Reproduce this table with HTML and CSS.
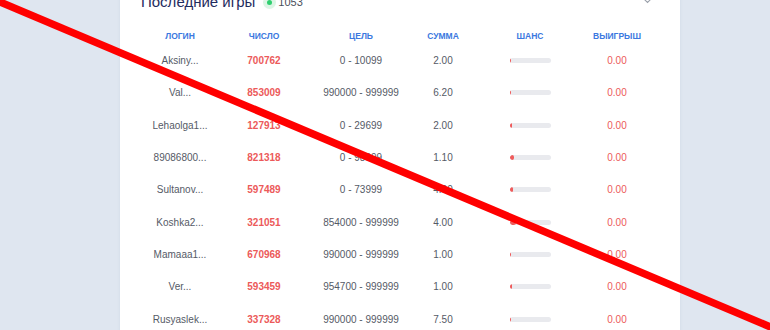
FILE: index.html
```html
<!DOCTYPE html>
<html lang="ru">
<head>
<meta charset="utf-8">
<title>Последние игры</title>
<link rel="stylesheet" href="styles.css">
</head>
<body>
<div class="page">
  <section class="card">
    <header class="card-head">
      <h2 class="title">Последние игры</h2>
      <span class="online"><span class="dot"></span></span>
      <span class="count">1053</span>
      <svg class="chevron" width="11" height="7" viewBox="0 0 11 7"><path d="M1 1 L5.5 5.5 L10 1" fill="none" stroke="#9aa0aa" stroke-width="1.1"/></svg>
    </header>
    <div class="table">
      <div class="thead">
        <div>Логин</div><div>Число</div><div>Цель</div><div>Сумма</div><div>Шанс</div><div>Выигрыш</div>
      </div>
      <div class="row"><div class="login">Aksiny...</div><div class="num">700762</div><div>0 - 10099</div><div>2.00</div><div class="chance"><span class="bar"><span class="fill" style="width:1.5px"></span></span></div><div class="win">0.00</div></div>
      <div class="row"><div class="login">Val...</div><div class="num">853009</div><div>990000 - 999999</div><div>6.20</div><div class="chance"><span class="bar"><span class="fill" style="width:1.5px"></span></span></div><div class="win">0.00</div></div>
      <div class="row"><div class="login">Lehaolga1...</div><div class="num">127913</div><div>0 - 29699</div><div>2.00</div><div class="chance"><span class="bar"><span class="fill" style="width:2px"></span></span></div><div class="win">0.00</div></div>
      <div class="row"><div class="login">89086800...</div><div class="num">821318</div><div>0 - 98999</div><div>1.10</div><div class="chance"><span class="bar"><span class="fill" style="width:4px"></span></span></div><div class="win">0.00</div></div>
      <div class="row"><div class="login">Sultanov...</div><div class="num">597489</div><div>0 - 73999</div><div>4.00</div><div class="chance"><span class="bar"><span class="fill" style="width:3.5px"></span></span></div><div class="win">0.00</div></div>
      <div class="row"><div class="login">Koshka2...</div><div class="num">321051</div><div>854000 - 999999</div><div>4.00</div><div class="chance"><span class="bar"><span class="fill" style="width:6px"></span></span></div><div class="win">0.00</div></div>
      <div class="row"><div class="login">Mamaaa1...</div><div class="num">670968</div><div>990000 - 999999</div><div>1.00</div><div class="chance"><span class="bar"><span class="fill" style="width:1.5px"></span></span></div><div class="win">0.00</div></div>
      <div class="row"><div class="login">Ver...</div><div class="num">593459</div><div>954700 - 999999</div><div>1.00</div><div class="chance"><span class="bar"><span class="fill" style="width:2px"></span></span></div><div class="win">0.00</div></div>
      <div class="row"><div class="login">Rusyaslek...</div><div class="num">337328</div><div>990000 - 999999</div><div>7.50</div><div class="chance"><span class="bar"><span class="fill" style="width:1.5px"></span></span></div><div class="win">0.00</div></div>
    </div>
  </section>
</div>
<svg class="strike" width="770" height="330" viewBox="0 0 770 330"><line x1="-10" y1="-2.2" x2="780" y2="331" stroke="#ff0000" stroke-width="7.5"/></svg>
</body>
</html>
```
FILE: styles.css
```css
html, body {
  margin: 0;
  padding: 0;
}
body {
  background: #dfe6f0;
  font-family: "Liberation Sans", Arial, sans-serif;
  width: 770px;
  height: 330px;
  overflow: hidden;
  position: relative;
}
.page {
  padding-left: 120px;
}
.card {
  width: 560px;
  height: 400px;
  margin-top: -8px;
  background: #ffffff;
  box-shadow: 0 0 3px rgba(60, 80, 120, 0.08);
  padding-left: 18px;
  box-sizing: border-box;
}
.card-head {
  display: flex;
  align-items: center;
  height: 20px;
  padding-left: 3px;
  padding-right: 27px;
}
.title {
  margin: 0;
  font-size: 15px;
  font-weight: normal;
  color: #1f2b5e;
  line-height: 20px;
}
.online {
  width: 13px;
  height: 13px;
  border-radius: 50%;
  background: #dcf5e5;
  display: flex;
  align-items: center;
  justify-content: center;
  margin-left: 8px;
}
.dot {
  width: 5px;
  height: 5px;
  border-radius: 50%;
  background: #2fcf6f;
}
.count {
  font-size: 11px;
  color: #4a4f5a;
  margin-left: 2px;
}
.chevron {
  margin-left: auto;
  margin-top: -3px;
}
.table {
  margin-top: 15px;
}
.thead, .row {
  display: grid;
  grid-template-columns: 84px 84px 110px 54px 120px 54px;
  align-items: center;
  justify-items: center;
  text-align: center;
}
.thead {
  height: 17.4px;
  font-size: 8.5px;
  font-weight: bold;
  text-transform: uppercase;
  color: #3b78e0;
}
.row {
  height: 32.35px;
  font-size: 10px;
  color: #555a66;
}
.num {
  color: #ec5a5a;
  font-weight: bold;
}
.win {
  color: #ec5a5a;
}
.chance {
  display: flex;
  align-items: center;
}
.bar {
  display: block;
  width: 41px;
  height: 5px;
  border-radius: 3px;
  background: #e9eaee;
  overflow: hidden;
}
.fill {
  display: block;
  height: 100%;
  background: #ef5b5b;
  border-radius: 3px;
}
.strike {
  position: absolute;
  left: 0;
  top: 0;
  pointer-events: none;
}
```
